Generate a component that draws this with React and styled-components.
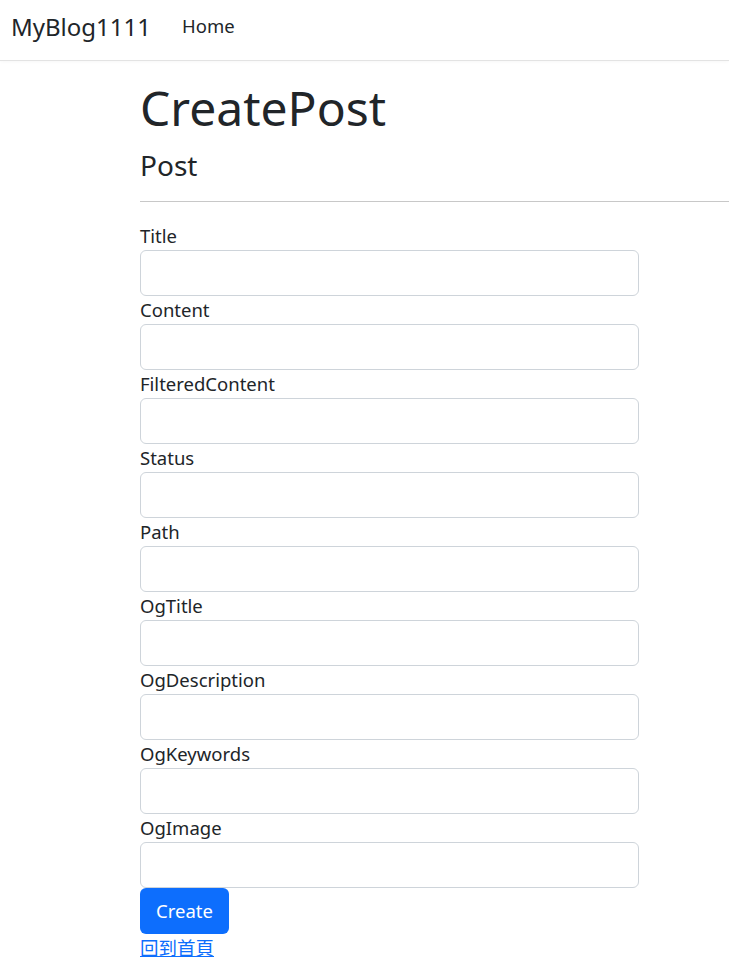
import React from 'react'
import styled, { createGlobalStyle } from 'styled-components'

const GlobalStyle = createGlobalStyle`
  html, body {
    margin: 0;
    padding: 0;
    background: #fff;
  }
  body {
    font-family: "Segoe UI", "Noto Sans", "Noto Sans CJK TC", sans-serif;
    color: #212529;
    overflow: hidden;
  }
  * {
    box-sizing: border-box;
  }
`

const Navbar = styled.nav`
  height: 61px;
  display: flex;
  align-items: center;
  padding: 0 11px;
  border-bottom: 1px solid #e3e3e3;
  box-shadow: 0 1px 3px rgba(0, 0, 0, 0.03);
`

const Brand = styled.a`
  font-size: 24px;
  color: #212529;
  text-decoration: none;
  margin-right: 31px;
  margin-top: -8px;
`

const NavLink = styled.a`
  font-size: 18.5px;
  color: #212529;
  text-decoration: none;
  margin-top: -10px;
`

const Main = styled.main`
  padding-left: 140px;
`

const Title = styled.h1`
  margin: 18px 0 0;
  font-size: 48px;
  font-weight: 400;
  line-height: 58px;
`

const SubTitle = styled.h4`
  margin: 10px 0 0;
  font-size: 28px;
  font-weight: 400;
  line-height: 36px;
`

const Rule = styled.hr`
  margin: 18px 0 20px;
  border: 0;
  border-top: 1px solid #c8c8c8;
`

const Form = styled.form`
  width: 499px;
`

const Group = styled.div`
  display: flex;
  flex-direction: column;
`

const Label = styled.label`
  font-size: 18.5px;
  line-height: 28px;
`

const Input = styled.input`
  height: 46px;
  width: 100%;
  border: 1px solid #ced4da;
  border-radius: 6px;
  padding: 6px 14px;
  font-size: 18.5px;
  font-family: inherit;
  outline: none;
`

const Button = styled.button`
  height: 46px;
  width: 89px;
  border: 0;
  border-radius: 6px;
  background: #0d6efd;
  color: #fff;
  font-size: 18.5px;
  font-family: inherit;
  display: block;
  padding: 0 0 2px;
`

const BackLink = styled.a`
  display: inline-block;
  color: #0d6efd;
  font-size: 18.5px;
  line-height: 28px;
  text-decoration: underline;
`

const fields = [
  'Title',
  'Content',
  'FilteredContent',
  'Status',
  'Path',
  'OgTitle',
  'OgDescription',
  'OgKeywords',
  'OgImage',
]

export default function App() {
  return (
    <>
      <GlobalStyle />
      <Navbar>
        <Brand href="#">MyBlog1111</Brand>
        <NavLink href="#">Home</NavLink>
      </Navbar>
      <Main>
        <Title>CreatePost</Title>
        <SubTitle>Post</SubTitle>
        <Rule />
        <Form onSubmit={e => e.preventDefault()}>
          {fields.map(name => (
            <Group key={name}>
              <Label htmlFor={name}>{name}</Label>
              <Input id={name} />
            </Group>
          ))}
          <Button type="submit">Create</Button>
        </Form>
        <BackLink href="#">回到首頁</BackLink>
      </Main>
    </>
  )
}
